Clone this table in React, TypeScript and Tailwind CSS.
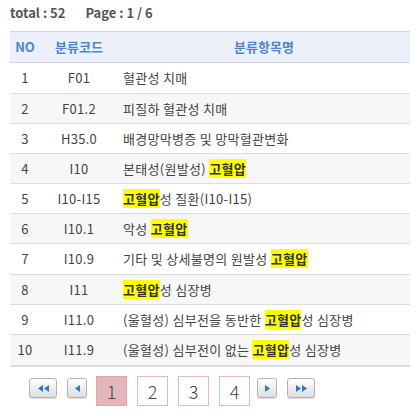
import React from "react";

type Part = { t: string; h?: boolean };
const rows: { no: string; code: string; name: Part[] }[] = [
  { no: "1", code: "F01", name: [{ t: "혈관성 치매" }] },
  { no: "2", code: "F01.2", name: [{ t: "피질하 혈관성 치매" }] },
  { no: "3", code: "H35.0", name: [{ t: "배경망막병증 및 망막혈관변화" }] },
  { no: "4", code: "I10", name: [{ t: "본태성(원발성) " }, { t: "고혈압", h: true }] },
  { no: "5", code: "I10-I15", name: [{ t: "고혈압", h: true }, { t: "성 질환(I10-I15)" }] },
  { no: "6", code: "I10.1", name: [{ t: "악성 " }, { t: "고혈압", h: true }] },
  { no: "7", code: "I10.9", name: [{ t: "기타 및 상세불명의 원발성 " }, { t: "고혈압", h: true }] },
  { no: "8", code: "I11", name: [{ t: "고혈압", h: true }, { t: "성 심장병" }] },
  { no: "9", code: "I11.0", name: [{ t: "(울혈성) 심부전을 동반한 " }, { t: "고혈압", h: true }, { t: "성 심장병" }] },
  { no: "10", code: "I11.9", name: [{ t: "(울혈성) 심부전이 없는 " }, { t: "고혈압", h: true }, { t: "성 심장병" }] },
];

const font = { fontFamily: '"Noto Sans CJK KR", "Noto Sans", sans-serif' };

function Tri({ dir }: { dir: "l" | "r" }) {
  return (
    <svg width="5" height="7" viewBox="0 0 5 7">
      {dir === "l" ? <polygon points="5,0 5,7 0,3.5" fill="#2b7bc4" /> : <polygon points="0,0 0,7 5,3.5" fill="#2b7bc4" />}
    </svg>
  );
}

function NavBtn({ w, children }: { w: string; children: React.ReactNode }) {
  return (
    <div
      className={`${w} h-[20px] mt-[2px] flex items-center justify-center gap-[1px] rounded-[3px] border border-[#b4b4b4] bg-gradient-to-b from-white to-[#dedede] shadow-[0_1px_1px_rgba(0,0,0,0.15)]`}
    >
      {children}
    </div>
  );
}

export default function App() {
  return (
    <div className="w-[420px] h-[416px] bg-white px-[10px]" style={font}>
      <div className="h-[31px] pt-[4px] flex text-[13px] leading-[18px] font-bold text-[#555]">
        <span>total : 52</span>
        <span className="ml-[20px]">Page : 1 / 6</span>
      </div>
      <div className="w-[400px] border-b-2 border-[#dcdcdc]">
        <div className="flex h-[32px] items-center bg-[#ebf0fb] border-t border-b border-[#d6d6d6] text-[13px] font-bold text-[#4f86c6]">
          <div className="w-[30px] text-center">NO</div>
          <div className="w-[78px] text-center">분류코드</div>
          <div className="flex-1 text-center">분류항목명</div>
        </div>
        {rows.map((r, i) => (
          <div
            key={r.no}
            className={`flex h-[30px] items-center text-[13px] tracking-[0.3px] text-[#444] ${i < rows.length - 1 ? "border-b border-[#dcdcdc]" : ""} ${i % 2 === 1 ? "bg-[#f7f7f7]" : "bg-white"} ${i === 0 || i === 6 ? "h-[31px]" : ""}`}
          >
            <div className="w-[30px] text-center">{r.no}</div>
            <div className="w-[78px] text-center">{r.code}</div>
            <div className="flex-1 pl-[5px] whitespace-pre">
              {r.name.map((p, j) =>
                p.h ? (
                  <span key={j} className="bg-[#ffff00] font-bold text-[#333]">
                    {p.t}
                  </span>
                ) : (
                  <span key={j}>{p.t}</span>
                )
              )}
            </div>
          </div>
        ))}
      </div>
      <div className="flex items-start mt-[9px] pl-[19px]">
        <NavBtn w="w-[28px]">
          <Tri dir="l" />
          <Tri dir="l" />
        </NavBtn>
        <div className="ml-[10px]">
          <NavBtn w="w-[20px]">
            <Tri dir="l" />
          </NavBtn>
        </div>
        <div className="ml-[9px] flex gap-[10px]">
          {["1", "2", "3", "4"].map((n) => (
            <div
              key={n}
              className={`w-[31px] h-[30px] flex items-center justify-center text-[18px] font-light text-[#444] border ${n === "1" ? "bg-[#e3b6bd] border-[#e3a4af]" : "bg-white border-[#e8b6be]"}`}
            >
              {n}
            </div>
          ))}
        </div>
        <div className="ml-[7px]">
          <NavBtn w="w-[20px]">
            <Tri dir="r" />
          </NavBtn>
        </div>
        <div className="ml-[10px]">
          <NavBtn w="w-[28px]">
            <Tri dir="r" />
            <Tri dir="r" />
          </NavBtn>
        </div>
      </div>
    </div>
  );
}
